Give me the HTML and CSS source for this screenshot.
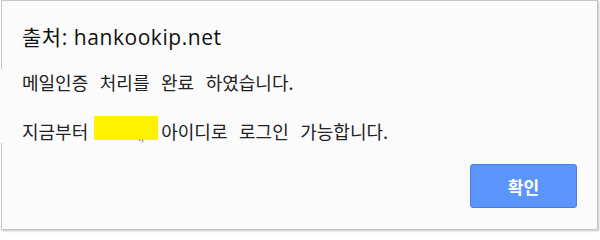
FILE: index.html
```html
<!DOCTYPE html>
<html lang="ko">
<head>
<meta charset="utf-8">
<link rel="stylesheet" href="styles.css">
</head>
<body>
<div class="dialog">
  <div class="title">출처: hankookip.net</div>
  <div class="message">
    <p class="line">메일인증 처리를 완료 하였습니다.</p>
    <p class="line line-2">지금부터<span class="mask"><span class="mask-dot">.,</span></span>아이디로 로그인 가능합니다.</p>
  </div>
  <div class="actions">
    <button class="ok">확인</button>
  </div>
</div>
</body>
</html>
```
FILE: styles.css
```css
html, body {
  margin: 0;
  padding: 0;
  background: #ffffff;
}
body {
  width: 600px;
  height: 233px;
  overflow: hidden;
  font-family: "Noto Sans CJK KR", "Noto Sans", sans-serif;
}
.dialog {
  box-sizing: border-box;
  margin-left: 1px;
  width: 597px;
  height: 230px;
  background: #fbfbfb;
  border: 1px solid #c6c6c6;
  box-shadow: 1px 1px 2px rgba(0, 0, 0, 0.25);
  display: flex;
  flex-direction: column;
}
.title {
  padding: 22px 0 0 20px;
  font-family: "Open Sans", "Noto Sans CJK KR", sans-serif;
  font-size: 21px;
  letter-spacing: 0.55px;
  line-height: 28px;
  color: #111;
  height: 44px;
  box-sizing: border-box;
}
.message {
  margin-left: -1px;
  padding: 2px 0 0 21px;
  background: #fbfbfb;
  margin-top: 24px;
  height: 72px;
}
.line {
  margin: 0;
  font-size: 18px;
  line-height: 22px;
  word-spacing: 6.5px;
  color: #222;
}
.line-2 {
  margin-top: 27px;
}
.mask {
  display: inline-block;
  vertical-align: top;
  width: 64px;
  height: 24px;
  margin: -4px 3px 0 6px;
  background: #fff200;
  position: relative;
}
.mask-dot {
  position: absolute;
  left: 44px;
  top: 15px;
  font-size: 10px;
  line-height: 12px;
  color: #777;
}
.actions {
  display: flex;
  justify-content: flex-end;
  padding: 21px 20px 0 0;
}
.ok {
  width: 107px;
  height: 44px;
  border: 1px solid #4a7fe0;
  border-radius: 3px;
  background: #5b95fb;
  color: #fff;
  font-family: "Noto Sans CJK KR", sans-serif;
  font-size: 17px;
  font-weight: 700;
  padding: 0;
}
```
